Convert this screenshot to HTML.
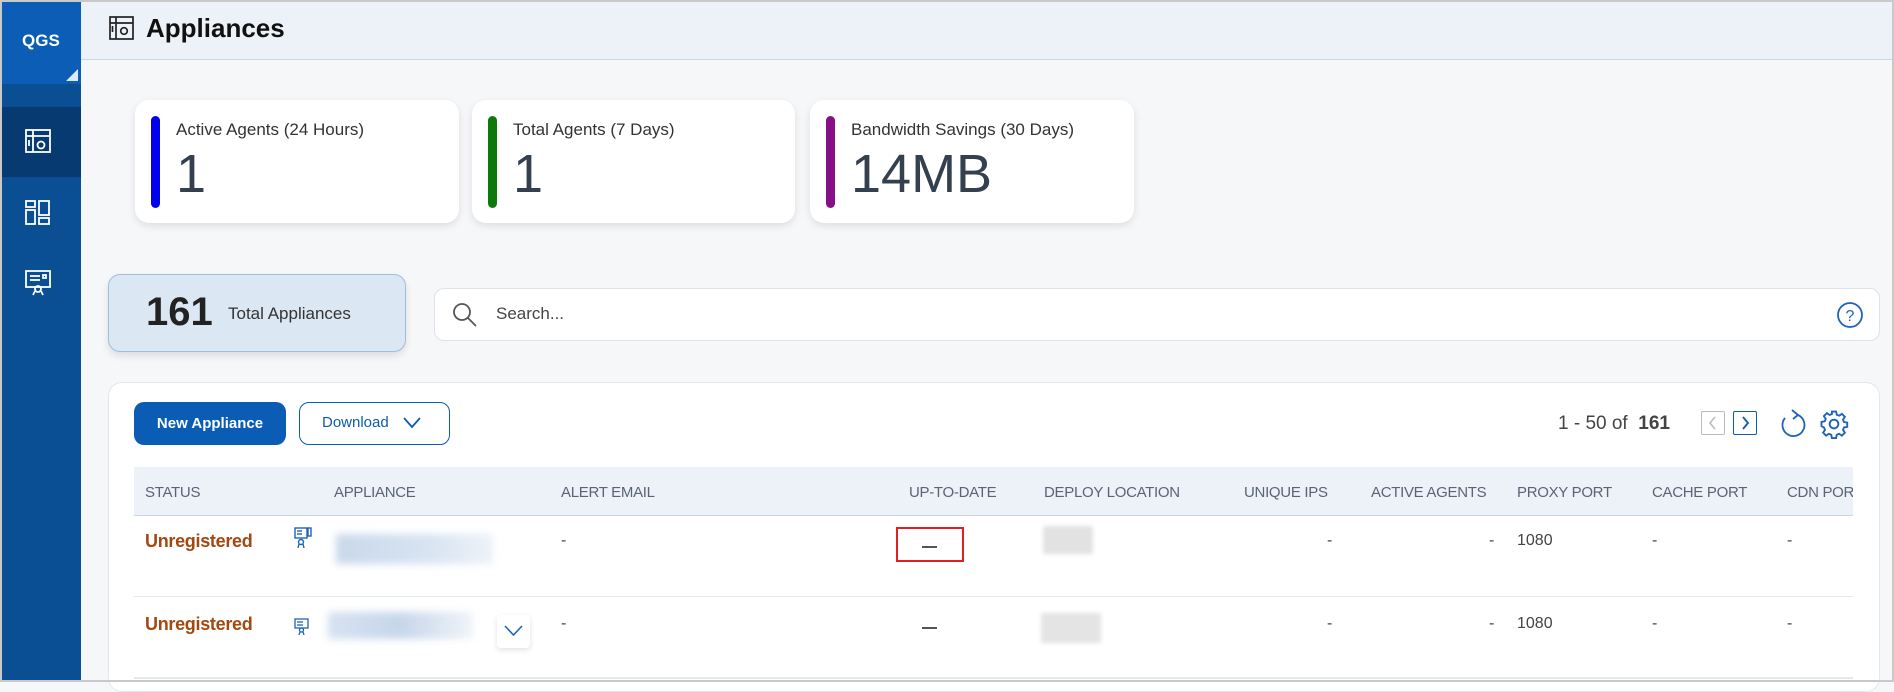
<!DOCTYPE html>
<html><head><meta charset="utf-8"><style>
*{box-sizing:border-box;margin:0;padding:0}
body{width:1894px;height:682px;overflow:hidden;font-family:"Liberation Sans",sans-serif;background:#f6f7f9;position:relative;color:#333}
.abs{position:absolute}
#frame{position:absolute;left:0;top:0;width:1894px;height:682px;border:2px solid #c9c9c9;pointer-events:none;z-index:10}
.side{left:0;top:0;width:81px;height:682px;background:#0a4f93}
.card{background:#fff;border-radius:14px;box-shadow:0 3px 8px rgba(0,0,0,.1)}
.bar{width:9px;border-radius:5px}
.lbl{font-size:17px;color:#333}
.num{font-size:54px;color:#34404e}
.hd{font-size:15px;color:#5a6474;top:484px;letter-spacing:-0.3px;white-space:nowrap}
.cell{font-size:16px;color:#444}
.blur{filter:blur(4px)}
.st{font-size:18px;font-weight:bold;color:#a4480f;letter-spacing:-0.3px}
</style></head><body>
<div id="frame"></div>
<div class="abs side"></div>
<div class="abs" style="left:0;top:0;width:81px;height:84px;background:#0b5db5"></div>
<div class="abs" style="left:22px;top:31px;color:#fff;font-weight:bold;font-size:17px">QGS</div>
<div class="abs" style="left:66px;top:69px;width:0;height:0;border-left:12px solid transparent;border-bottom:12px solid #dce9f7"></div>
<div class="abs" style="left:0;top:107px;width:81px;height:70px;background:#073a70"></div>
<svg class="abs" style="left:25px;top:128px" width="26" height="26" viewBox="0 0 26 26" fill="none" stroke="#fff" stroke-width="1.8"><rect x="1" y="2" width="24" height="22"/><line x1="1" y1="8" x2="25" y2="8"/><line x1="8" y1="2" x2="8" y2="24"/><circle cx="16" cy="17" r="3.5"/><line x1="4" y1="12" x2="4" y2="18"/></svg>
<svg class="abs" style="left:25px;top:200px" width="26" height="26" viewBox="0 0 26 26" fill="none" stroke="#fff" stroke-width="1.8"><rect x="1" y="1" width="9" height="6"/><rect x="1" y="10" width="9" height="14"/><rect x="14" y="1" width="10" height="14"/><rect x="14" y="18" width="10" height="6"/></svg>
<svg class="abs" style="left:25px;top:270px" width="26" height="26" viewBox="0 0 26 26" fill="none" stroke="#fff" stroke-width="1.8"><rect x="1" y="1" width="24" height="16"/><line x1="5" y1="6" x2="15" y2="6"/><line x1="5" y1="10" x2="15" y2="10"/><rect x="18" y="5" width="3" height="3"/><circle cx="13" cy="19" r="3"/><path d="M10 21l-2 4M16 21l2 4"/></svg>

<div class="abs" style="left:81px;top:0;width:1813px;height:60px;background:#edf2f9;border-bottom:1px solid #c8d6e8"></div>
<svg class="abs" style="left:109px;top:16px" width="26" height="24" viewBox="0 0 26 24" fill="none" stroke="#222" stroke-width="1.7"><rect x="1" y="1" width="23" height="22"/><line x1="1" y1="7" x2="24" y2="7"/><line x1="7" y1="1" x2="7" y2="23"/><circle cx="15" cy="15" r="3.3"/><line x1="3.5" y1="10" x2="3.5" y2="16"/></svg>
<div class="abs" style="left:146px;top:13px;font-size:26px;font-weight:bold;color:#111">Appliances</div>

<div class="abs card" style="left:135px;top:100px;width:324px;height:123px"></div>
<div class="abs bar" style="left:151px;top:116px;height:92px;background:#0000ee"></div>
<div class="abs lbl" style="left:176px;top:120px">Active Agents (24 Hours)</div>
<div class="abs num" style="left:176px;top:143px">1</div>
<div class="abs card" style="left:472px;top:100px;width:323px;height:123px"></div>
<div class="abs bar" style="left:488px;top:116px;height:92px;background:#0b7a0b"></div>
<div class="abs lbl" style="left:513px;top:120px">Total Agents (7 Days)</div>
<div class="abs num" style="left:513px;top:143px">1</div>
<div class="abs card" style="left:810px;top:100px;width:324px;height:123px"></div>
<div class="abs bar" style="left:826px;top:116px;height:92px;background:#870f87"></div>
<div class="abs lbl" style="left:851px;top:120px">Bandwidth Savings (30 Days)</div>
<div class="abs num" style="left:851px;top:143px">14MB</div>

<div class="abs" style="left:108px;top:274px;width:298px;height:78px;background:#dce7f4;border:1px solid #9fbde0;border-radius:12px;box-shadow:0 4px 8px rgba(0,0,0,.1)"></div>
<div class="abs" style="left:146px;top:290px;font-size:40px;font-weight:bold;color:#222">161</div>
<div class="abs" style="left:228px;top:304px;font-size:17px;color:#333">Total Appliances</div>

<div class="abs" style="left:434px;top:288px;width:1446px;height:53px;background:#fff;border:1px solid #dde3ea;border-radius:10px"></div>
<svg class="abs" style="left:452px;top:302px" width="26" height="26" viewBox="0 0 26 26" fill="none" stroke="#555" stroke-width="1.8"><circle cx="10" cy="10" r="8"/><line x1="16" y1="16" x2="24" y2="24"/></svg>
<div class="abs" style="left:496px;top:304px;font-size:17px;color:#444">Search...</div>
<svg class="abs" style="left:1836px;top:301px" width="28" height="28" viewBox="0 0 28 28" fill="none" stroke="#1e63b8" stroke-width="1.8"><circle cx="14" cy="14" r="12"/><text x="14" y="20" text-anchor="middle" font-size="16" fill="#1e63b8" stroke="none" font-family="Liberation Sans">?</text></svg>

<div class="abs" style="left:108px;top:382px;width:1772px;height:310px;background:#fff;border:1px solid #e2e7ee;border-radius:14px"></div>
<div class="abs" style="left:134px;top:402px;width:152px;height:43px;background:#0b5cb5;border-radius:10px;color:#fff;font-size:15px;font-weight:bold;text-align:center;line-height:43px">New Appliance</div>
<div class="abs" style="left:299px;top:402px;width:151px;height:43px;border:1.5px solid #0b5cb5;border-radius:10px;color:#0b5cb5;font-size:15px;line-height:40px;padding-left:22px">Download</div>
<svg class="abs" style="left:403px;top:417px" width="18" height="12" viewBox="0 0 18 12" fill="none" stroke="#0b5cb5" stroke-width="1.8"><path d="M1 1l8 9 8-9"/></svg>

<div class="abs" style="left:1558px;top:413px;font-size:19px;color:#444">1 - 50 of &nbsp;<b>161</b></div>
<div class="abs" style="left:1701px;top:411px;width:24px;height:24px;border:1.5px solid #bbb;border-radius:2px"></div>
<svg class="abs" style="left:1707px;top:416px" width="12" height="14" viewBox="0 0 12 14" fill="none" stroke="#bbb" stroke-width="1.6"><path d="M8 1L3 7l5 6"/></svg>
<div class="abs" style="left:1733px;top:411px;width:24px;height:24px;border:1.8px solid #0b5cb5;border-radius:2px"></div>
<svg class="abs" style="left:1739px;top:416px" width="12" height="14" viewBox="0 0 12 14" fill="none" stroke="#0b5cb5" stroke-width="1.8"><path d="M4 1l5 6-5 6"/></svg>
<svg class="abs" style="left:1779px;top:409px" width="28" height="30" viewBox="0 0 28 30" fill="none" stroke="#1e63b8" stroke-width="1.8"><path d="M19 6A11 11 0 1 1 6 9"/><path d="M13 1l6 5-5 4"/></svg>
<svg class="abs" style="left:1819px;top:409px" width="30" height="30" viewBox="0 0 24 24" fill="none" stroke="#1e63b8" stroke-width="1.5"><circle cx="12" cy="12" r="3.5"/><path d="M10.3 2h3.4l.5 2.6 1.9.8 2.2-1.5 2.4 2.4-1.5 2.2.8 1.9 2.6.5v3.4l-2.6.5-.8 1.9 1.5 2.2-2.4 2.4-2.2-1.5-1.9.8-.5 2.6h-3.4l-.5-2.6-1.9-.8-2.2 1.5-2.4-2.4 1.5-2.2-.8-1.9L2 13.7v-3.4l2.6-.5.8-1.9-1.5-2.2 2.4-2.4 2.2 1.5 1.9-.8z"/></svg>

<div class="abs" style="left:134px;top:467px;width:1719px;height:49px;background:#edf2f9;border-bottom:1px solid #c8d6e8"></div>
<div class="abs hd" style="left:145px">STATUS</div>
<div class="abs hd" style="left:334px">APPLIANCE</div>
<div class="abs hd" style="left:561px">ALERT EMAIL</div>
<div class="abs hd" style="left:909px">UP-TO-DATE</div>
<div class="abs hd" style="left:1044px">DEPLOY LOCATION</div>
<div class="abs hd" style="left:1244px">UNIQUE IPS</div>
<div class="abs hd" style="left:1371px">ACTIVE AGENTS</div>
<div class="abs hd" style="left:1517px">PROXY PORT</div>
<div class="abs hd" style="left:1652px">CACHE PORT</div>
<div class="abs hd" style="left:1787px;width:66px;overflow:hidden">CDN PORT</div>

<div class="abs" style="left:134px;top:596px;width:1719px;height:1px;background:#e3e9f1"></div>
<div class="abs" style="left:134px;top:677px;width:1719px;height:2px;background:#e3e9f1"></div>

<div class="abs st" style="left:145px;top:531px">Unregistered</div>
<svg class="abs" style="left:294px;top:527px" width="18" height="22" viewBox="0 0 18 22" fill="none" stroke="#1e63b8" stroke-width="1.4"><rect x="1" y="1" width="12" height="10"/><line x1="3" y1="4" x2="8" y2="4"/><line x1="3" y1="7" x2="8" y2="7"/><rect x="14" y="1" width="3" height="8"/><circle cx="7" cy="15" r="2.5"/><path d="M5 17l-1 4M9 17l1 4"/></svg>
<div class="abs blur" style="left:336px;top:534px;width:157px;height:30px;background:linear-gradient(90deg,#c9d8ea,#d8e4f2 60%,#edf2f8)"></div>
<div class="abs cell" style="left:561px;top:532px">-</div>
<div class="abs" style="left:896px;top:527px;width:68px;height:35px;border:2px solid #e02020"></div>
<div class="abs" style="left:922px;top:546px;width:15px;height:2px;background:#555"></div>
<div class="abs" style="left:1043px;top:526px;width:50px;height:28px;background:#e2e2e2;filter:blur(2px)"></div>
<div class="abs cell" style="left:1327px;top:532px">-</div>
<div class="abs cell" style="left:1489px;top:532px">-</div>
<div class="abs cell" style="left:1517px;top:532px">1080</div>
<div class="abs cell" style="left:1652px;top:532px">-</div>
<div class="abs cell" style="left:1787px;top:532px">-</div>

<div class="abs st" style="left:145px;top:614px">Unregistered</div>
<svg class="abs" style="left:294px;top:618px" width="15" height="17" viewBox="0 0 15 17" fill="none" stroke="#1e63b8" stroke-width="1.3"><rect x="1" y="1" width="13" height="9"/><line x1="3" y1="4" x2="9" y2="4"/><line x1="3" y1="7" x2="9" y2="7"/><circle cx="7.5" cy="12" r="2"/><path d="M6 14l-1 3M9 14l1 3"/></svg>
<div class="abs blur" style="left:328px;top:612px;width:145px;height:27px;background:linear-gradient(90deg,#d6e2f0,#c6d6ea 50%,#f0f4f9)"></div>
<div class="abs" style="left:497px;top:615px;width:33px;height:33px;background:#fff;border-radius:4px;box-shadow:0 2px 6px rgba(0,0,0,.12)"></div>
<svg class="abs" style="left:504px;top:625px" width="19" height="12" viewBox="0 0 19 12" fill="none" stroke="#1e63b8" stroke-width="1.6"><path d="M1 1l8.5 9L18 1"/></svg>
<div class="abs cell" style="left:561px;top:615px">-</div>
<div class="abs" style="left:922px;top:627px;width:15px;height:2px;background:#555"></div>
<div class="abs" style="left:1041px;top:613px;width:60px;height:30px;background:#e4e4e4;filter:blur(2px)"></div>
<div class="abs cell" style="left:1327px;top:615px">-</div>
<div class="abs cell" style="left:1489px;top:615px">-</div>
<div class="abs cell" style="left:1517px;top:615px">1080</div>
<div class="abs cell" style="left:1652px;top:615px">-</div>
<div class="abs cell" style="left:1787px;top:615px">-</div>
</body></html>
